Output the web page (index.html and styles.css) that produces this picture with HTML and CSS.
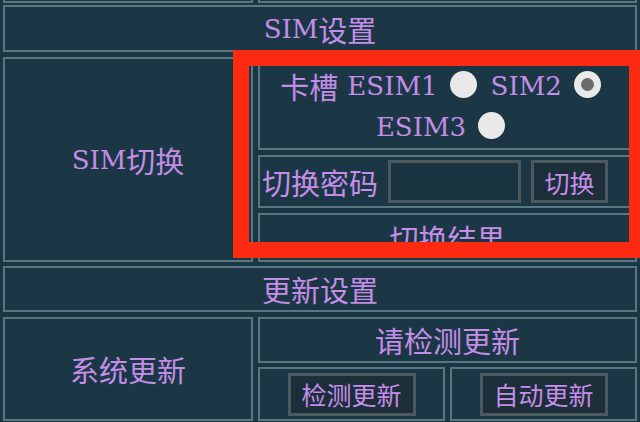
FILE: index.html
```html
<!DOCTYPE html>
<html lang="zh">
<head>
<meta charset="utf-8">
<link rel="stylesheet" href="styles.css">
</head>
<body>
<div class="page">
  <div class="prev">
    <div class="prev-cell"></div>
    <div class="prev-cell"></div>
  </div>

  <div class="cell head"><span class="lat">SIM</span>设置</div>

  <div class="row sim">
    <div class="cell side"><span class="lat">SIM</span>切换</div>
    <div class="col">
      <div class="cell radios">
        <div class="rline">卡槽 <span class="lat">ESIM1</span><span class="radio"></span><span class="lat">SIM2</span><span class="radio on"></span></div>
        <div class="rline"><span class="lat">ESIM3</span><span class="radio"></span></div>
      </div>
      <div class="cell pw">
        <span class="label">切换密码</span>
        <span class="input"></span>
        <span class="btn small">切换</span>
      </div>
      <div class="cell result">切换结果</div>
    </div>
  </div>

  <div class="cell head upd">更新设置</div>

  <div class="row sys">
    <div class="cell side">系统更新</div>
    <div class="col">
      <div class="cell status">请检测更新</div>
      <div class="btns">
        <div class="cell bcell"><span class="btn">检测更新</span></div>
        <div class="cell bcell"><span class="btn">自动更新</span></div>
      </div>
    </div>
  </div>
</div>
<div class="highlight"></div>
</body>
</html>
```

FILE: styles.css
```css
html, body {
  margin: 0;
  padding: 0;
}
body {
  width: 640px;
  height: 422px;
  overflow: hidden;
  background: #1a3644;
  color: #c48de6;
  font-family: "DejaVu Serif", "Noto Sans CJK SC", serif;
  font-size: 29px;
  position: relative;
}
.page {
  padding: 0 3px;
  display: flex;
  flex-direction: column;
}
.lat {
  font-size: 26px;
}
.cell {
  border: 2px solid #5a767e;
  box-sizing: border-box;
  display: flex;
  align-items: center;
  justify-content: center;
  background: #1b3745;
  min-height: 0;
  overflow: hidden;
}
.prev {
  display: grid;
  grid-template-columns: 250px 1fr;
  gap: 5px;
  height: 3px;
}
.prev-cell {
  border: 2px solid #5a767e;
  border-top: none;
  height: 3px;
  box-sizing: border-box;
}
.head {
  margin-top: 2px;
  height: 47px;
  flex: none;
}
.row {
  display: grid;
  grid-template-columns: 250px 1fr;
  gap: 5px;
  margin-top: 5px;
  flex: none;
}
.sim {
  height: 205px;
}
.col {
  display: flex;
  flex-direction: column;
  gap: 5px;
  min-height: 0;
}
.side {
  height: 100%;
}
.radios {
  height: 93px;
  flex: none;
  flex-direction: column;
  padding-top: 6px;
}
.rline {
  display: flex;
  align-items: center;
  justify-content: center;
  height: 41px;
  white-space: pre;
}
.radio {
  width: 27px;
  height: 27px;
  border-radius: 50%;
  background: #e9e9ea;
  margin: 0 14px 4px 12px;
  display: inline-flex;
  align-items: center;
  justify-content: center;
  flex: none;
}
.radio.on::after {
  content: "";
  width: 13px;
  height: 13px;
  border-radius: 50%;
  background: #6b6b6b;
}
.pw {
  height: 53px;
  flex: none;
  justify-content: flex-start;
  padding-left: 2px;
}
.label {
  font-family: "Noto Sans CJK SC", sans-serif;
  margin-right: 10px;
}
.input {
  width: 133px;
  height: 43px;
  box-sizing: border-box;
  border: 3px solid #4b5a5f;
  background: #1a3340;
  margin-right: 10px;
}
.btn {
  font-family: "Noto Sans CJK SC", sans-serif;
  font-size: 25px;
  border: 3px solid #4b5a5f;
  background: #1c2e3a;
  box-sizing: border-box;
  height: 43px;
  display: inline-flex;
  align-items: center;
  justify-content: center;
}
.btn.small {
  width: 77px;
}
.result {
  flex: 1;
  align-items: flex-start;
  padding-top: 9px;
  line-height: 1;
  font-family: "Noto Sans CJK SC", sans-serif;
}
.upd {
  margin-top: 4px;
  height: 46px;
  font-family: "Noto Sans CJK SC", sans-serif;
}
.sys {
  height: 104px;
}
.sys .side {
  font-family: "Noto Sans CJK SC", sans-serif;
}
.status {
  height: 46px;
  flex: none;
  font-family: "Noto Sans CJK SC", sans-serif;
}
.btns {
  flex: 1;
  display: grid;
  grid-template-columns: 1fr 1fr;
  gap: 5px;
  margin-top: -1px;
}
.bcell .btn {
  width: 128px;
}
.highlight {
  position: absolute;
  left: 233px;
  top: 50px;
  width: 412px;
  height: 208px;
  box-sizing: border-box;
  border: 16px solid #fb2a10;
}
```
